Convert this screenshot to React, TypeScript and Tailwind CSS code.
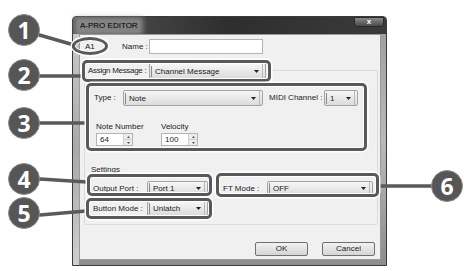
import React from 'react';

const font = 'font-["Liberation_Sans",Arial,sans-serif]';

function Select({ value, className }: { value: string; className: string }) {
  return (
    <div
      className={`flex items-center justify-between border border-[#a3a3a3] rounded-[2px] bg-gradient-to-b from-[#f6f6f6] to-[#dcdcdc] ${className}`}
    >
      <span className="border-l border-[#8a8a8a] ml-[1px] pl-[3px] leading-[11px] text-[8px] text-[#222] whitespace-nowrap">{value}</span>
      <span className="flex items-center h-full border-r border-[#b8b8b8] pr-[3px] mr-[2px]">
        <svg width="5" height="3" viewBox="0 0 5 3">
          <path d="M0 0h5L2.5 3z" fill="#222" />
        </svg>
      </span>
    </div>
  );
}

function Spin({ value }: { value: string }) {
  return (
    <div className="flex w-[37px] h-[13px] bg-white border border-[#b5b5b5]">
      <span className="flex-1 pl-[3px] text-[8px] leading-[11px] text-[#222]">{value}</span>
      <div className="flex flex-col w-[9px] border-l border-[#cfcfcf]">
        <div className="flex-1 flex items-center justify-center bg-[#ececec] border-b border-[#cfcfcf]">
          <svg width="3" height="2" viewBox="0 0 3 2"><path d="M0 2h3L1.5 0z" fill="#555" /></svg>
        </div>
        <div className="flex-1 flex items-center justify-center bg-[#ececec]">
          <svg width="3" height="2" viewBox="0 0 3 2"><path d="M0 0h3L1.5 2z" fill="#555" /></svg>
        </div>
      </div>
    </div>
  );
}

function Callout({ className }: { className: string }) {
  return (
    <div
      className={`absolute border-[3px] border-[#595959] shadow-[0_0_0_1.5px_#ffffff,inset_0_0_0_1px_#ffffff] ${className}`}
    />
  );
}

function Badge({ n, className }: { n: string; className: string }) {
  return (
    <div
      className={`absolute w-[32px] h-[32px] rounded-full bg-[#565656] border border-[#8c8c8c] flex items-center justify-center text-white text-[23px] font-bold font-["Open_Sans",sans-serif] leading-none ${className}`}
    >
      {n}
    </div>
  );
}

export default function App() {
  return (
    <div className={`relative w-[464px] h-[271px] bg-white overflow-hidden ${font}`}>
      {/* dialog window */}
      <div className="ml-[72px] mt-[16px] w-[315px] h-[250px] flex flex-col border border-[#3a3a3a] rounded-t-[4px] bg-gradient-to-b from-[#9c9c9c] via-[#b9b9b9] to-[#8d8d8d]">
        <div className="h-[17px] flex items-center justify-between bg-gradient-to-r from-[#575757] via-[#2e2e2e] to-[#3a3a3a] rounded-t-[3px]">
          <span className="ml-[5px] px-[2px] text-[8px] text-black bg-[#9a9a9a]/70 shadow-[0_0_5px_3px_rgba(160,160,160,0.7)]">A-PRO EDITOR</span>
          <div className="mr-[2px] self-start w-[30px] h-[10px] flex items-center justify-center bg-gradient-to-b from-[#8a8a8a] to-[#4a4a4a] border border-[#2a2a2a] rounded-b-[3px]">
            <span className="text-[8px] leading-none text-white font-bold">x</span>
          </div>
        </div>
        <div className="flex-1 flex">
          <div className="w-[6px] bg-gradient-to-b from-[#c9c9c9] via-[#a9a9a9] to-[#cfcfcf]" />
          <div className="flex-1 mb-[5px] mr-[5px] bg-[#f0f0f0] border border-[#9a9a9a] text-[8px] text-[#222] whitespace-nowrap">
            {/* name row */}
            <div className="mt-[4px] h-[15px] flex items-center">
              <span className="w-[42px] pl-[5px]">A1</span>
              <span className="w-[27px]">Name :</span>
              <div className="w-[114px] h-[15px] bg-white border border-[#b4b4b4]" />
            </div>

            {/* group box */}
            <div className="ml-[4px] mt-[16px] w-[294px] h-[155px] border border-[#d6dde2] rounded-[2px]">
              <div className="-mt-[8px] h-[16px] w-fit flex items-center pl-[3px] pr-[4px] bg-[#f0f0f0]">
                <span className="w-[61px] tracking-[-0.3px]">Assign Message :</span>
                <Select value="Channel Message" className="w-[117px] h-[16px]" />
              </div>

              <div className="mt-[11px] h-[16px] flex items-center pl-[9px]">
                <span className="w-[29px]">Type :</span>
                <Select value="Note" className="w-[140px] h-[16px]" />
                <span className="ml-[6px] w-[55px]">MIDI Channel :</span>
                <Select value="1" className="w-[34px] h-[16px]" />
              </div>

              <div className="mt-[16px] flex pl-[11px]">
                <div className="w-[65px] flex flex-col gap-[1px]">
                  <span className="h-[10px] leading-[10px]">Note Number</span>
                  <Spin value="64" />
                </div>
                <div className="flex flex-col gap-[1px]">
                  <span className="h-[10px] leading-[10px]">Velocity</span>
                  <Spin value="100" />
                </div>
              </div>

              <div className="mt-[19px] h-[10px] leading-[10px] pl-[6px]">Settings</div>

              <div className="mt-[6px] h-[15px] flex items-center pl-[8px]">
                <span className="w-[54px]">Output Port :</span>
                <Select value="Port 1" className="w-[61px] h-[15px]" />
                <span className="ml-[15px] w-[44px]">FT Mode :</span>
                <Select value="OFF" className="w-[106px] h-[15px]" />
              </div>

              <div className="mt-[5px] h-[15px] flex items-center pl-[8px]">
                <span className="w-[54px]">Button Mode :</span>
                <Select value="Unlatch" className="w-[61px] h-[15px]" />
              </div>
            </div>

            {/* buttons */}
            <div className="mt-[17px] flex justify-end gap-[14px] pr-[5px]">
              <div className="w-[53px] h-[14px] flex items-center justify-center border border-[#707070] rounded-[2px] bg-gradient-to-b from-[#f2f2f2] to-[#d4d4d4]">OK</div>
              <div className="w-[53px] h-[14px] flex items-center justify-center border border-[#707070] rounded-[2px] bg-gradient-to-b from-[#f2f2f2] to-[#d4d4d4]">Cancel</div>
            </div>
          </div>
        </div>
      </div>

      {/* leader lines */}
      <svg className="absolute left-0 top-0" width="464" height="271" viewBox="0 0 464 271">
        <g stroke="#5a5a5a" strokeWidth="3.5" strokeLinecap="round" fill="none">
          <line x1="36" y1="34" x2="74" y2="45" />
          <line x1="40" y1="76" x2="82" y2="76" />
          <line x1="40" y1="123" x2="86" y2="123" />
          <line x1="40" y1="179" x2="87" y2="182" />
          <line x1="40" y1="215" x2="86" y2="211" />
          <line x1="379" y1="186" x2="432" y2="186" />
        </g>
      </svg>

      {/* callout frames */}
      <Callout className="left-[72px] top-[37px] w-[36px] h-[18px] rounded-[50%]" />
      <Callout className="left-[82px] top-[60px] w-[189px] h-[22px] rounded-[5px]" />
      <Callout className="left-[86px] top-[83px] w-[281px] h-[68px] rounded-[5px]" />
      <Callout className="left-[87px] top-[174px] w-[125px] h-[22px] rounded-[5px]" />
      <Callout className="left-[86px] top-[198px] w-[126px] h-[21px] rounded-[5px]" />
      <Callout className="left-[216px] top-[173px] w-[163px] h-[24px] rounded-[5px]" />

      {/* number badges */}
      <Badge n="1" className="left-[8px] top-[14px]" />
      <Badge n="2" className="left-[8px] top-[59px]" />
      <Badge n="3" className="left-[8px] top-[107px]" />
      <Badge n="4" className="left-[8px] top-[163px]" />
      <Badge n="5" className="left-[8px] top-[197px]" />
      <Badge n="6" className="left-[431px] top-[170px]" />
    </div>
  );
}
